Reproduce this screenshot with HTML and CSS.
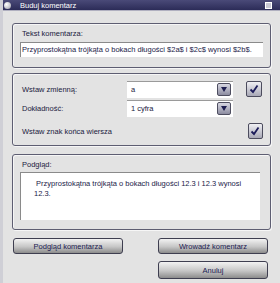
FILE: index.html
```html
<!DOCTYPE html>
<html lang="pl">
<head>
  <meta charset="UTF-8">
  <title>Buduj komentarz</title>
  <link rel="stylesheet" href="styles.css">
</head>
<body>
  <div class="window">
    <div class="titlebar">
      <span class="app-icon"></span>
      <span class="title">Buduj komentarz</span>
      <span class="restore"></span>
    </div>

    <div class="content">
      <!-- Tekst komentarza -->
      <div class="group group-text">
        <div class="label">Tekst komentarza:</div>
        <div class="input">Przyprostokątna trójkąta o bokach długości $2a$ i $2c$ wynosi $2b$.</div>
      </div>

      <!-- Zmienne -->
      <div class="group group-vars">
        <div class="row">
          <div class="row-label">Wstaw zmienną:</div>
          <div class="select"><span>a</span><span class="arrow"></span></div>
          <div class="check">
            <svg width="10" height="10" viewBox="0 0 10 10"><path d="M1.5 5.5 L4 8 L8.5 1.5" fill="none" stroke="#1c1c5a" stroke-width="1.8"/></svg>
          </div>
        </div>
        <div class="row">
          <div class="row-label">Dokładność:</div>
          <div class="select"><span>1 cyfra</span><span class="arrow"></span></div>
        </div>
        <div class="row row-eol">
          <div class="row-label wide">Wstaw znak końca wiersza</div>
          <div class="check">
            <svg width="10" height="10" viewBox="0 0 10 10"><path d="M1.5 5.5 L4 8 L8.5 1.5" fill="none" stroke="#1c1c5a" stroke-width="1.8"/></svg>
          </div>
        </div>
      </div>

      <!-- Podgląd -->
      <div class="group group-preview">
        <div class="label">Podgląd:</div>
        <div class="preview">&nbsp;Przyprostokątna trójkąta o bokach długości 12.3 i 12.3 wynosi 12.3.</div>
      </div>

      <div class="buttons">
        <button class="button">Podgląd komentarza</button>
        <div class="buttons-right">
          <button class="button">Wrowadź komentarz</button>
          <button class="button">Anuluj</button>
        </div>
      </div>
    </div>
  </div>
</body>
</html>
```

FILE: styles.css
```css
body {
  margin: 0;
  background-color: #e3e3e3;
  font-family: 'Liberation Sans', Arial, sans-serif;
  font-size: 7.5px;
  color: #202040;
}
.window {
  width: 280px;
  height: 283px;
  box-sizing: border-box;
  border-left: 3px solid #cfcfd6;
  background-color: #e3e3e3;
  overflow: hidden;
}
.titlebar {
  height: 10px;
  margin-left: -3px;
  display: flex;
  align-items: center;
  background: linear-gradient(#4a4a78, #2c2c58);
  border-bottom: 1px solid #b0b0c0;
  color: #fff;
  position: relative;
}
.app-icon {
  width: 7px;
  height: 7px;
  margin-left: 4px;
  border-radius: 50%;
  background: radial-gradient(circle at 35% 35%, #fff, #9a9aa8);
}
.title {
  margin-left: 9px;
  font-size: 7.5px;
}
.restore {
  position: absolute;
  right: 8px;
  top: 2px;
  width: 5px;
  height: 5px;
  border: 1px solid #fff;
  background-color: #c8c8d4;
}
.content {
  padding: 12px 9px 0 9px;
}
.group {
  border: 1px solid #5e5e72;
  border-radius: 3px;
  box-shadow: inset 1px 1px 0 #f6f6f6, 1px 1px 0 #f6f6f6;
  box-sizing: border-box;
  padding: 0 7px;
}
.label {
  padding-left: 2px;
}
.group-text {
  height: 45px;
  padding-top: 5px;
}
.input {
  margin-top: 4px;
  height: 14px;
  line-height: 14px;
  background-color: #fff;
  border-top: 1px solid #8a8a8a;
  border-left: 1px solid #8a8a8a;
  padding-left: 1px;
  white-space: nowrap;
  overflow: hidden;
  color: #1a1a48;
}
.group-vars {
  margin-top: 5px;
  height: 73px;
  padding-top: 6px;
}
.row {
  display: flex;
  align-items: center;
  height: 18px;
  margin-bottom: 1px;
}
.row-label {
  width: 107px;
  padding-left: 2px;
  box-sizing: border-box;
}
.row-label.wide {
  width: 226px;
}
.row-eol {
  margin-top: 5px;
}
.select {
  width: 106px;
  height: 17px;
  box-sizing: border-box;
  background-color: #fff;
  border-top: 1px solid #9a9a9a;
  display: flex;
  align-items: center;
  justify-content: space-between;
  padding: 0 2px 0 4px;
}
.arrow {
  width: 12px;
  height: 11px;
  border: 1px solid #4e4e60;
  border-radius: 2px;
  background: linear-gradient(#d8d8e2, #8c8ca0) ;
  position: relative;
}
.arrow::after {
  content: '';
  position: absolute;
  left: 3px;
  top: 3px;
  border-left: 3px solid transparent;
  border-right: 3px solid transparent;
  border-top: 5px solid #1e1e50;
}
.check {
  width: 16px;
  height: 16px;
  margin-left: 13px;
  box-sizing: border-box;
  border: 1px solid #4c4c5e;
  border-radius: 2px;
  background: linear-gradient(#f0f0f4, #a8a8b6);
  display: flex;
  align-items: center;
  justify-content: center;
}
.group-preview {
  margin-top: 8px;
  height: 76px;
  padding-top: 5px;
  padding-right: 10px;
}
.preview {
  margin-top: 3px;
  height: 48px;
  box-sizing: border-box;
  background-color: #fff;
  border-top: 1px solid #8a8a8a;
  border-left: 1px solid #8a8a8a;
  padding: 6px 4px 0 13px;
  line-height: 10px;
  color: #1a1a48;
}
.buttons {
  display: flex;
  justify-content: space-between;
  margin-top: 8px;
  padding: 0 3px 0 1px;
}
.buttons-right {
  display: flex;
  flex-direction: column;
  gap: 7px;
}
.button {
  width: 110px;
  height: 16px;
  padding: 0;
  border: 1px solid #3e3e50;
  border-radius: 3px;
  background: linear-gradient(#f2f2f2, #c6c6c6 55%, #8c8c8c);
  font-family: 'Liberation Sans', Arial, sans-serif;
  font-size: 7.5px;
  color: #1a1a50;
}
.buttons-right .button:last-child {
  height: 18px;
}
```
